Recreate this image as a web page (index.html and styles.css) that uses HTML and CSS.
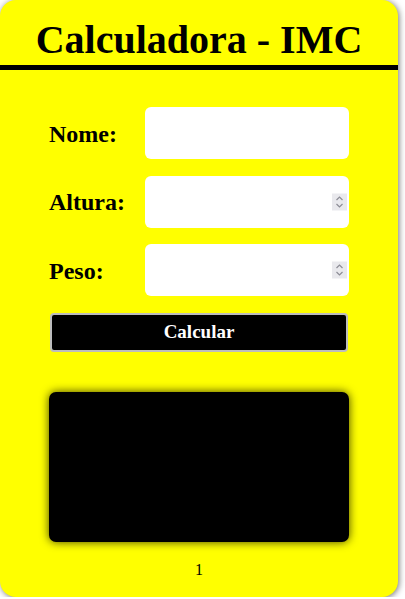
FILE: index.html
```html
<!DOCTYPE html>
<html lang="pt">
<head>
<meta charset="utf-8">
<title>Calculadora - IMC</title>
<link rel="stylesheet" href="styles.css">
</head>
<body>
<div class="card">
  <h1 class="title">Calculadora - IMC</h1>
  <form class="form">
    <div class="row">
      <label class="label" for="nome">Nome:</label>
      <div class="wrap">
        <input class="field" id="nome" type="text">
      </div>
    </div>
    <div class="row">
      <label class="label" for="altura">Altura:</label>
      <div class="wrap">
        <input class="field" id="altura" type="number">
        <span class="spin" aria-hidden="true">
          <svg width="15" height="17" viewBox="0 0 15 17"><path d="M4.5 6.5 L7.5 3.5 L10.5 6.5 M4.5 10.5 L7.5 13.5 L10.5 10.5" fill="none" stroke="#8d8d96" stroke-width="1.2"/></svg>
        </span>
      </div>
    </div>
    <div class="row">
      <label class="label" for="peso">Peso:</label>
      <div class="wrap">
        <input class="field" id="peso" type="number">
        <span class="spin" aria-hidden="true">
          <svg width="15" height="17" viewBox="0 0 15 17"><path d="M4.5 6.5 L7.5 3.5 L10.5 6.5 M4.5 10.5 L7.5 13.5 L10.5 10.5" fill="none" stroke="#8d8d96" stroke-width="1.2"/></svg>
        </span>
      </div>
    </div>
    <button class="btn" type="button">Calcular</button>
  </form>
  <div class="result"></div>
  <p class="count">1</p>
</div>
</body>
</html>
```
FILE: styles.css
```css
html, body {
  margin: 0;
  padding: 0;
  background: #ffffff;
}
body {
  font-family: "Liberation Serif", "Times New Roman", serif;
}
.card {
  width: 398px;
  height: 597px;
  box-sizing: border-box;
  background: #ffff00;
  border-radius: 16px;
  box-shadow: 1px 1px 6px rgba(0, 0, 0, 0.55);
  display: flex;
  flex-direction: column;
  align-items: center;
  overflow: hidden;
}
.title {
  margin: 0;
  width: 100%;
  text-align: center;
  font-size: 40px;
  font-weight: bold;
  padding-top: 15px;
  line-height: 50px;
  height: 50px;
  border-bottom: 5px solid #000;
  box-sizing: content-box;
}
.form {
  width: 300px;
  margin-top: 37px;
  display: flex;
  flex-direction: column;
  gap: 16.5px;
}
.row {
  display: flex;
  align-items: center;
}
.label {
  width: 96px;
  flex-shrink: 0;
  font-size: 24px;
  font-weight: bold;
  padding-top: 2px;
}
.wrap {
  position: relative;
  flex: 1;
  min-width: 0;
  display: flex;
}
.field {
  flex: 1;
  min-width: 0;
  height: 52px;
  box-sizing: border-box;
  border: none;
  border-radius: 6px;
  background: #fff;
  padding: 1px 20px 1px 8px;
  font-size: 16px;
  outline: none;
  -moz-appearance: textfield;
}
.field::-webkit-inner-spin-button,
.field::-webkit-outer-spin-button {
  -webkit-appearance: none;
  margin: 0;
}
.spin {
  position: absolute;
  right: 2px;
  top: 50%;
  transform: translateY(-50%);
  width: 15px;
  height: 17px;
  background: #e9e9ed;
  display: flex;
}
.btn {
  margin: 0 1px;
  height: 39px;
  background: #000;
  color: #fff;
  font-family: "Liberation Serif", "Times New Roman", serif;
  font-size: 19px;
  font-weight: bold;
  border: 2px solid #bdbdbd;
  border-radius: 4px;
}
.result {
  margin-top: 40px;
  width: 300px;
  height: 150px;
  background: #000;
  border-radius: 7px;
  box-shadow: 0 0 10px rgba(0, 0, 0, 0.75);
}
.count {
  margin: 18px 0 0;
  font-size: 16px;
  line-height: 20px;
}
```
